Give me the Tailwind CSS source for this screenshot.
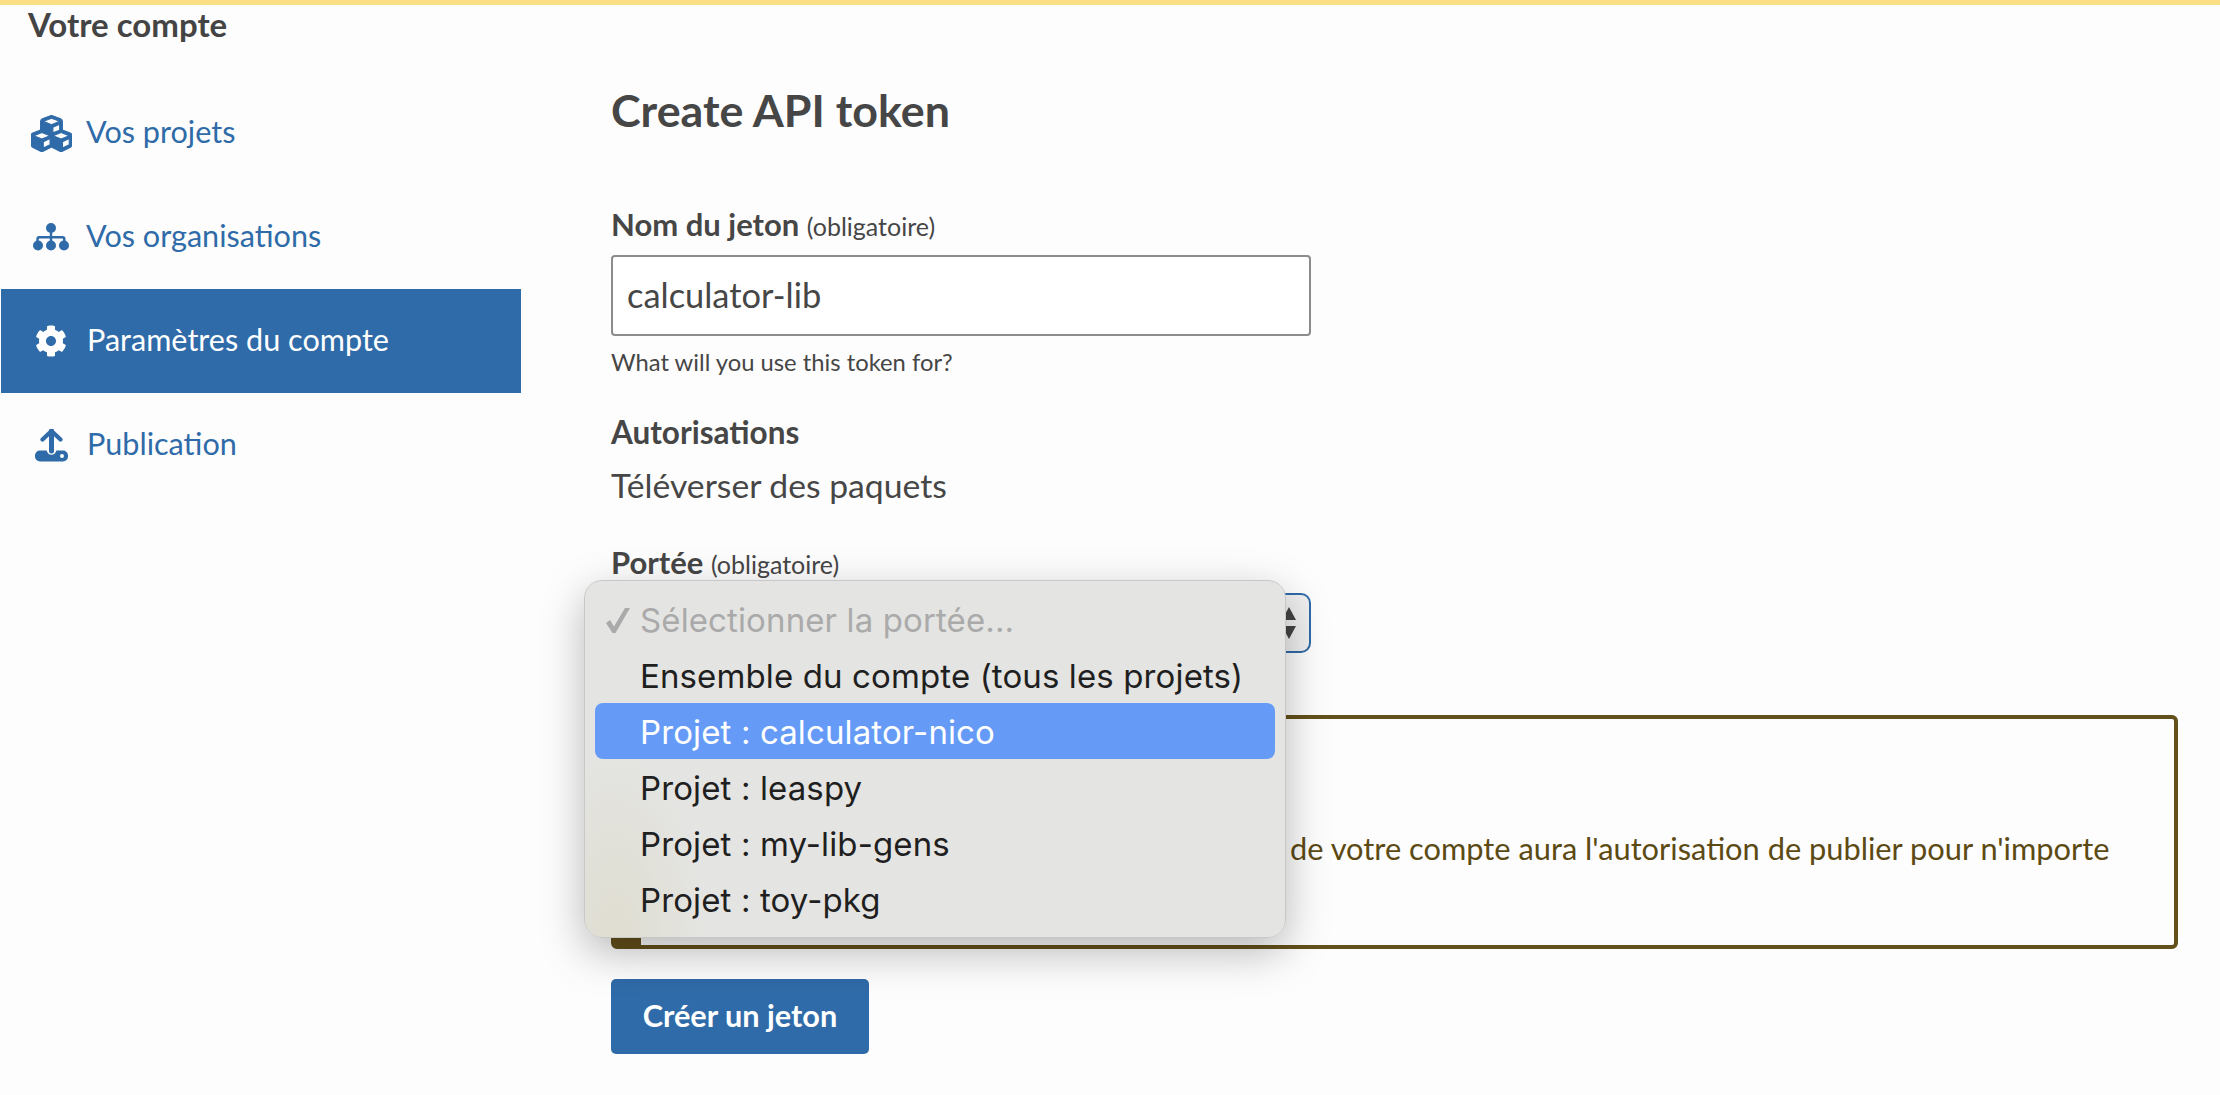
<!DOCTYPE html>
<html lang="fr">
<head>
<meta charset="utf-8">
<title>Create API token</title>
<script src="https://cdn.jsdelivr.net/npm/@tailwindcss/browser@4"></script>
</head>
<body class="relative h-[1095px] w-[2220px] overflow-hidden bg-[#fdfdfd] font-['Lato',sans-serif] text-[#464646]">
<div class="h-[5px] bg-[#fbdf85]"></div>
<div class="flex">
  <aside class="w-[521px] shrink-0 pl-[1px]">
    <h3 class="h-[76px] pl-[27px] text-[33px] leading-[38px] font-bold text-[#444]">Votre compte</h3>
    <nav class="flex flex-col text-[#2f6ba8] text-[30.6px]">
      <a class="flex h-[104px] items-center">
        <span class="flex w-[85px] justify-center pl-[15px]">
          <svg class="h-[41px] w-[41px] fill-[#2f6ba8] stroke-[#2f6ba8] stroke-[14px]" viewBox="0 0 512 512"><path d="M488.6 250.2L392 214V105.5c0-15-9.3-28.4-23.4-33.7l-100-37.5c-8.1-3.1-17.1-3.1-25.3 0l-100 37.5c-14.1 5.3-23.4 18.7-23.4 33.7V214l-96.6 36.2C9.3 255.5 0 268.9 0 283.9V394c0 13.6 7.7 26.1 19.9 32.2l100 50c10.1 5.1 22.1 5.1 32.2 0l103.9-52 103.9 52c10.1 5.1 22.1 5.1 32.2 0l100-50c12.2-6.1 19.9-18.6 19.9-32.2V283.9c0-15-9.3-28.4-23.4-33.7zM358 214.8l-85 31.9v-68.2l85-37v73.3zM154 104.1l102-38.2 102 38.2v.6l-102 41.4-102-41.4v-.6zm84 291.1l-85 42.5v-79.1l85-38.8v75.4zm0-112l-102 41.4-102-41.4v-.6l102-38.2 102 38.2v.6zm240 112l-85 42.5v-79.1l85-38.8v75.4zm0-112l-102 41.4-102-41.4v-.6l102-38.2 102 38.2v.6z"/></svg>
        </span>
        <span class="-mt-[2px]">Vos projets</span>
      </a>
      <a class="flex h-[104px] items-center">
        <span class="flex w-[85px] justify-center pl-[15px]">
          <svg class="h-[28px] w-[36px]" viewBox="0 0 36 28" fill="#2f6ba8"><circle cx="18" cy="5" r="5"/><circle cx="5" cy="22.5" r="5"/><circle cx="18" cy="22.5" r="5"/><circle cx="31" cy="22.5" r="5"/><path d="M16.8 8h2.4v5h10.3a3 3 0 0 1 3 3v3h-2.4v-2.6a.9.9 0 0 0-.9-.9H19.2V19h-2.4v-3.5H6.6a.9.9 0 0 0-.9.9V19H3.3v-3a3 3 0 0 1 3-3h10.5z"/></svg>
        </span>
        <span class="-mt-[2px]">Vos organisations</span>
      </a>
      <a class="flex h-[104px] items-center bg-[#2f6ba8] text-white">
        <span class="flex w-[86px] justify-center pl-[14px]">
          <svg class="h-[32px] w-[32px] fill-white" viewBox="0 0 512 512"><path d="M487.4 315.7l-42.6-24.6c4.3-23.2 4.3-47 0-70.2l42.6-24.6c4.9-2.8 7.1-8.6 5.5-14-11.1-35.6-30-67.8-54.7-94.6-3.8-4.1-10-5.1-14.8-2.3L380.8 110c-17.9-15.4-38.5-27.3-60.8-35.1V25.8c0-5.6-3.9-10.5-9.4-11.7-36.7-8.2-74.3-7.8-109.2 0-5.5 1.2-9.4 6.1-9.4 11.7V75c-22.2 7.9-42.8 19.8-60.8 35.1L88.7 85.5c-4.9-2.8-11-1.9-14.8 2.3-24.7 26.7-43.6 58.9-54.7 94.6-1.7 5.4.6 11.2 5.5 14L67.3 221c-4.3 23.2-4.3 47 0 70.2l-42.6 24.6c-4.9 2.8-7.1 8.6-5.5 14 11.1 35.6 30 67.8 54.7 94.6 3.8 4.1 10 5.1 14.8 2.3l42.6-24.6c17.9 15.4 38.5 27.3 60.8 35.1v49.2c0 5.6 3.9 10.5 9.4 11.7 36.7 8.2 74.3 7.8 109.2 0 5.5-1.2 9.4-6.1 9.4-11.7v-49.2c22.2-7.9 42.8-19.8 60.8-35.1l42.6 24.6c4.9 2.8 11 1.9 14.8-2.3 24.7-26.7 43.6-58.9 54.7-94.6 1.5-5.5-.7-11.3-5.6-14.1zM256 336c-44.1 0-80-35.9-80-80s35.9-80 80-80 80 35.9 80 80-35.9 80-80 80z"/></svg>
        </span>
        <span class="-mt-[2px]">Paramètres du compte</span>
      </a>
      <a class="flex h-[104px] items-center">
        <span class="flex w-[86px] justify-center pl-[14px]">
          <svg class="h-[33px] w-[33px]" viewBox="0 0 33 33"><path d="M16.5 2v20" stroke="#2f6ba8" stroke-width="5" stroke-linecap="round" fill="none"/><path d="M7.5 10.5l9-8.5 9 8.5" stroke="#2f6ba8" stroke-width="4.2" stroke-linecap="round" stroke-linejoin="round" fill="none"/><path d="M5 21.5h6.6c.8 2.8 2.6 4.2 4.9 4.2s4.1-1.4 4.9-4.2H28a5 5 0 0 1 5 5v1a5 5 0 0 1-5 5H5a5 5 0 0 1-5-5v-1a5 5 0 0 1 5-5z" fill="#2f6ba8"/><circle cx="27" cy="27" r="2" fill="#fff"/></svg>
        </span>
        <span class="-mt-[2px]">Publication</span>
      </a>
    </nav>
  </aside>
  <main class="w-[1567px] pl-[90px]">
    <div class="w-[1567px]">
      <h1 class="mt-[80px] text-[44.8px] leading-[50px] font-bold text-[#464646]">Create API token</h1>
      <label class="mt-[71px] block text-[31px] leading-[36px] font-bold">Nom du jeton <span class="text-[25px] leading-none font-normal">(obligatoire)</span></label>
      <div class="mt-[13px] flex h-[81px] w-[700px] items-center rounded-[4px] border-2 border-[#8c8c8c] bg-white pb-[2px] pl-[14px] text-[34.4px]">calculator-lib</div>
      <p class="mt-[11px] text-[23.8px] leading-[30px]">What will you use this token for?</p>
      <h4 class="mt-[37px] text-[31.5px] leading-[36px] font-bold">Autorisations</h4>
      <p class="mt-[15px] text-[33.7px] leading-[40px]">Téléverser des paquets</p>
      <label class="mt-[39px] block text-[31px] leading-[36px] font-bold">Portée <span class="text-[25px] leading-none font-normal">(obligatoire)</span></label>
      <div class="mt-[13px] flex h-[60px] w-[700px] items-center justify-end rounded-[10px] border-2 border-[#2f6ba8] bg-linear-to-r from-[#dcdcdc] to-[#f0f0f0] pr-[12px]">
        <svg class="h-[32px] w-[16px]" viewBox="0 0 16 32" fill="#444"><path d="M8 0l7 13H1zM8 32L1 19h14z"/></svg>
      </div>
      <div class="mt-[62px] flex h-[234px] w-[1567px] items-center rounded-[6px] border-[4px] border-l-[30px] border-[#64501a] pl-[649px] pt-[34px] text-[30.8px] text-[#5c4a14]">de votre compte aura l'autorisation de publier pour n'importe</div>
      <button class="mt-[30px] h-[75px] w-[258px] rounded-[5px] bg-[#2f6ba8] text-[30.7px] font-bold text-white">Créer un jeton</button>
    </div>
  </main>
</div>

<div class="absolute left-[584px] top-[580px] flex h-[358px] w-[702px] flex-col rounded-[18px] border border-[#c8c8c8] bg-[radial-gradient(ellipse_90px_190px_at_30px_100%,#dfddd0,#e4e4e2)] px-[10px] py-[10px] font-['Inter',sans-serif] text-[33px] leading-[56px] tracking-[0.12px] text-[#1f1f1f] shadow-[0_14px_44px_rgba(0,0,0,0.28)]">
  <div class="relative h-[56px] pl-[45px] pt-[1px] text-[#aaaaaa]"><svg class="absolute left-[11px] top-[17px] h-[25px] w-[24px]" viewBox="0 0 24 25" fill="#aaaaaa"><path d="M0 15l4-3 4 6.500L19 0h5L9.500 25h-3z"/></svg>Sélectionner la portée...</div>
  <div class="h-[56px] pl-[45px] pt-[1px]">Ensemble du compte (tous les projets)</div>
  <div class="h-[56px] rounded-[8px] bg-[#659bf7] pl-[45px] pt-[1px] text-white">Projet : calculator-nico</div>
  <div class="h-[56px] pl-[45px] pt-[1px]">Projet : leaspy</div>
  <div class="h-[56px] pl-[45px] pt-[1px]">Projet : my-lib-gens</div>
  <div class="h-[56px] pl-[45px] pt-[1px]">Projet : toy-pkg</div>
</div>
</body>
</html>
